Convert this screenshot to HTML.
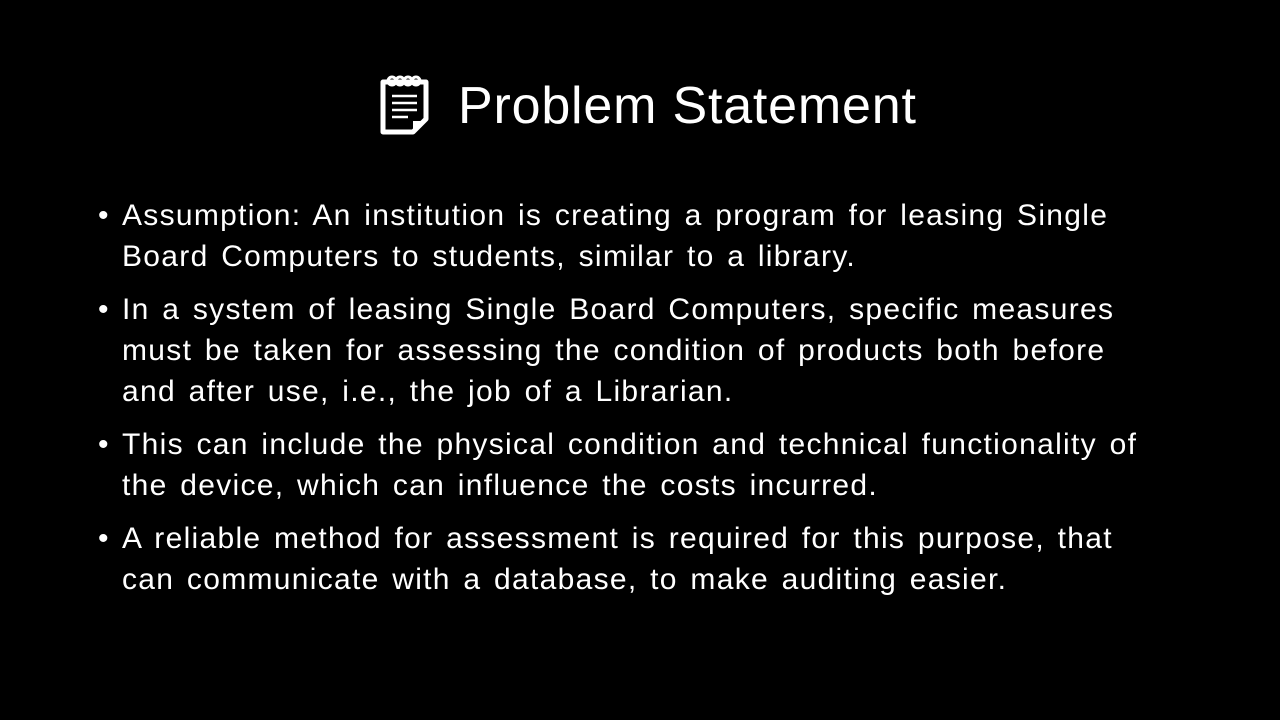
<!DOCTYPE html>
<html><head><style>
body{margin:0;width:1280px;height:720px;background:#000;overflow:hidden;font-family:"Liberation Sans",sans-serif;color:#fff}
.t{position:absolute;left:458px;top:76px;font-size:52px;white-space:nowrap;letter-spacing:0.8px;font-weight:300}
.b{position:absolute;left:122px;font-size:30px;line-height:41px;white-space:nowrap;letter-spacing:1.3px;word-spacing:3px}
.b:before{content:"•";position:absolute;left:-24px}
</style></head><body>
<svg style="position:absolute;left:380px;top:74px" width="50" height="62" viewBox="0 0 50 62">
<path d="M3 8 H46 V45 L33 58 H3 Z" fill="none" stroke="#fff" stroke-width="5" stroke-linejoin="round"/>
<g fill="none" stroke="#fff" stroke-width="3"><circle cx="12" cy="7" r="4"/><circle cx="20" cy="7" r="4"/><circle cx="28" cy="7" r="4"/><circle cx="36" cy="7" r="4"/></g>
<g stroke="#fff" stroke-width="2.5"><line x1="12" y1="22" x2="37" y2="22"/><line x1="12" y1="29" x2="37" y2="29"/><line x1="12" y1="36" x2="37" y2="36"/><line x1="12" y1="43" x2="28" y2="43"/></g>
<path d="M33 58 V47 H46 Z" fill="#fff"/>
</svg>
<div class="t">Problem Statement</div>
<div class="b" style="top:195px">Assumption: An institution is creating a program for leasing Single<br>Board Computers to students, similar to a library.</div>
<div class="b" style="top:289px">In a system of leasing Single Board Computers, specific measures<br>must be taken for assessing the condition of products both before<br>and after use, i.e., the job of a Librarian.</div>
<div class="b" style="top:424px">This can include the physical condition and technical functionality of<br>the device, which can influence the costs incurred.</div>
<div class="b" style="top:518px">A reliable method for assessment is required for this purpose, that<br>can communicate with a database, to make auditing easier.</div>
</body></html>
